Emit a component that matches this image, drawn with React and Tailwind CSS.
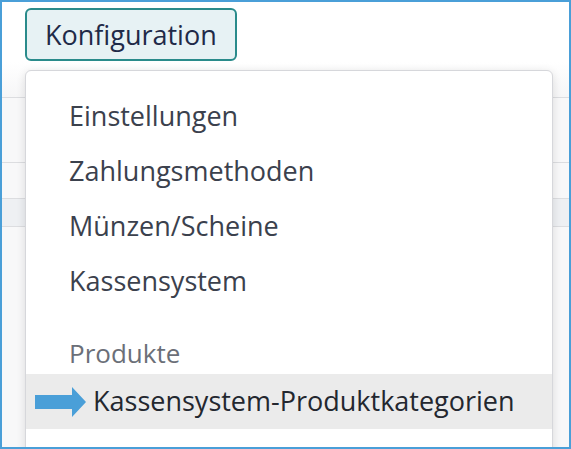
import React from 'react';

const items = ['Einstellungen', 'Zahlungsmethoden', 'Münzen/Scheine', 'Kassensystem'];

const ArrowRight = () => (
  <svg width="52" height="30" viewBox="0 0 52 30" className="shrink-0">
    <path d="M0 8 H37 V0 L51 15 L37 30 V22 H0 Z" fill="#4a9fd8" />
  </svg>
);

export default function App() {
  return (
    <div className="relative w-[571px] h-[449px] overflow-hidden border-2 border-[#4a9fd8] bg-white font-['Open_Sans',sans-serif]">
      {/* page behind the menu */}
      <div className="h-[60px] pt-[6px] pl-[23px]">
        <button className="h-[53px] px-[18px] rounded-[6px] border-2 border-[#2a8b8b] bg-[#e7f2f4] text-[27px] leading-none text-[#1f2a48]">
          Konfiguration
        </button>
      </div>
      <div className="h-[36px] bg-gradient-to-b from-white to-[#f6f6f7] border-b border-[#dcdde0]" />
      <div className="h-[65px] bg-[#f8f8f9] border-b border-[#dcdde0]" />
      <div className="h-[36px] bg-[#f8f8f9] border-b border-[#dcdde0]" />
      <div className="h-[28px] bg-[#eef0f3] border-b border-[#dcdde0]" />
      <div className="h-[240px] bg-[#f8f8f9]" />

      {/* dropdown menu */}
      <div className="absolute left-[23px] top-[68px] w-[528px] h-[400px] rounded-[6px] border border-[#d6d7db] bg-white shadow-[0_2px_10px_rgba(0,0,0,0.12)] pt-[18px]">
        {items.map((label) => (
          <div key={label} className="h-[55px] flex items-center pl-[43px] text-[27px] text-[#3b414d]">
            {label}
          </div>
        ))}
        <div className="h-[65px] flex items-end pb-[6px] pl-[43px] text-[26px] leading-[30px] text-[#6b6f78]">
          Produkte
        </div>
        <div className="h-[55px] flex items-center gap-[6px] pl-[9px] bg-[#ebebeb] text-[27px] text-[#23272f]">
          <ArrowRight />
          <span>Kassensystem-Produktkategorien</span>
        </div>
      </div>
    </div>
  );
}
